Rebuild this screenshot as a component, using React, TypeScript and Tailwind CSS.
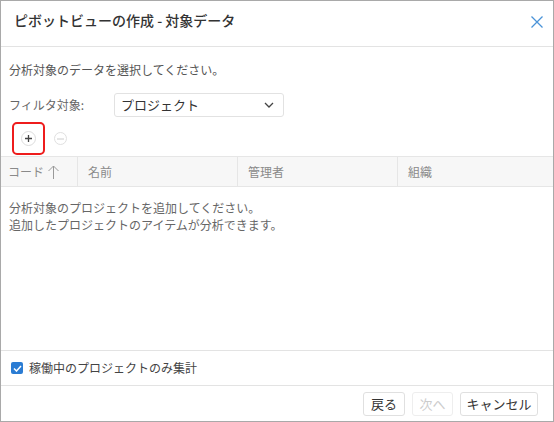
import React from "react";

const font = { fontFamily: '"Noto Sans CJK JP", "Noto Sans", sans-serif' };

export default function App() {
  return (
    <div style={font} className="w-[554px] h-[422px] bg-white border border-[#a9a9a9] flex flex-col overflow-hidden">
      {/* header */}
      <div className="h-[46px] shrink-0 border-b border-[#e3e3e3] flex items-start justify-between pl-[13px] pr-[9px] pt-[9px]">
        <div className="text-[14px] leading-[20px] text-[#333] font-medium">ピボットビューの作成 - 対象データ</div>
        <svg width="14" height="14" viewBox="0 0 14 14" className="mt-[5px]">
          <path d="M1.5 1.5 L12.5 12.5 M12.5 1.5 L1.5 12.5" stroke="#4a93d8" strokeWidth="1.3" fill="none" />
        </svg>
      </div>
      {/* body */}
      <div className="flex-1 flex flex-col min-h-0">
        <div className="pl-[8px] mt-[14px] text-[12px] leading-[18px] text-[#555]">分析対象のデータを選択してください。</div>
        <div className="mt-[14px] flex items-center h-[24px] pl-[8px]">
          <div className="w-[105px] text-[12px] text-[#666]">フィルタ対象:</div>
          <div className="w-[170px] h-[24px] border border-[#e2e2e2] rounded-[3px] flex items-center justify-between pl-[6px] pr-[9px]">
            <span className="text-[13px] text-[#333]">プロジェクト</span>
            <svg width="10" height="6" viewBox="0 0 10 6">
              <path d="M1 1 L5 5 L9 1" stroke="#444" strokeWidth="1.3" fill="none" />
            </svg>
          </div>
        </div>
        <div className="mt-[5px] flex items-center h-[33px] pl-[11px]">
          <div className="w-[33px] h-[33px] border-2 border-[#ee1c1c] rounded-[5px] flex items-center justify-center">
            <div className="w-[15px] h-[15px] rounded-full border border-[#dcdcdc] flex items-center justify-center">
              <svg width="7" height="7" viewBox="0 0 7 7">
                <path d="M3.5 0 V7 M0 3.5 H7" stroke="#444" strokeWidth="1.3" />
              </svg>
            </div>
          </div>
          <div className="ml-[9px] w-[13px] h-[13px] rounded-full border border-[#e0e0e0] flex items-center justify-center">
            <svg width="7" height="2" viewBox="0 0 7 2">
              <path d="M0 1 H7" stroke="#ccc" strokeWidth="1" />
            </svg>
          </div>
        </div>
        <div className="mt-px h-[31px] bg-[#f7f7f7] border-y border-[#e6e6e6] flex text-[12px] text-[#8a8a8a]">
          <div className="w-[77px] border-r border-[#e6e6e6] flex items-center pl-[7px] gap-[4px]">
            <span>コード</span>
            <svg width="11" height="14" viewBox="0 0 11 14">
              <path d="M5.5 1 V14 M0.5 6 L5.5 1 L10.5 6" stroke="#999" strokeWidth="1" fill="none" />
            </svg>
          </div>
          <div className="w-[160px] border-r border-[#e6e6e6] flex items-center pl-[10px]">名前</div>
          <div className="w-[160px] border-r border-[#e6e6e6] flex items-center pl-[10px]">管理者</div>
          <div className="flex-1 flex items-center pl-[10px]">組織</div>
        </div>
        <div className="pl-[8px] pt-[12px] text-[12px] leading-[17px] text-[#666]">
          <div>分析対象のプロジェクトを追加してください。</div>
          <div>追加したプロジェクトのアイテムが分析できます。</div>
        </div>
      </div>
      {/* checkbox row */}
      <div className="h-[36px] shrink-0 border-y border-[#e3e3e3] flex items-center pl-[10px] gap-[6px]">
        <div className="w-[12px] h-[12px] rounded-[2px] bg-[#2b7cd3] flex items-center justify-center">
          <svg width="9" height="7" viewBox="0 0 9 7">
            <path d="M1 3.5 L3.5 6 L8 1" stroke="white" strokeWidth="1.5" fill="none" />
          </svg>
        </div>
        <span className="text-[12px] text-[#444]">稼働中のプロジェクトのみ集計</span>
      </div>
      {/* buttons */}
      <div className="h-[35px] shrink-0 flex items-center justify-end pr-[15px] gap-[7px] pt-[1px]">
        <button className="w-[42px] h-[24px] border border-[#e0e0e0] rounded-[3px] text-[13px] text-[#333] bg-white">戻る</button>
        <button className="w-[41px] h-[24px] border border-[#eeeeee] rounded-[3px] text-[13px] text-[#ccc] bg-white">次へ</button>
        <button className="w-[78px] h-[24px] border border-[#e0e0e0] rounded-[3px] text-[13px] text-[#333] bg-white">キャンセル</button>
      </div>
    </div>
  );
}
